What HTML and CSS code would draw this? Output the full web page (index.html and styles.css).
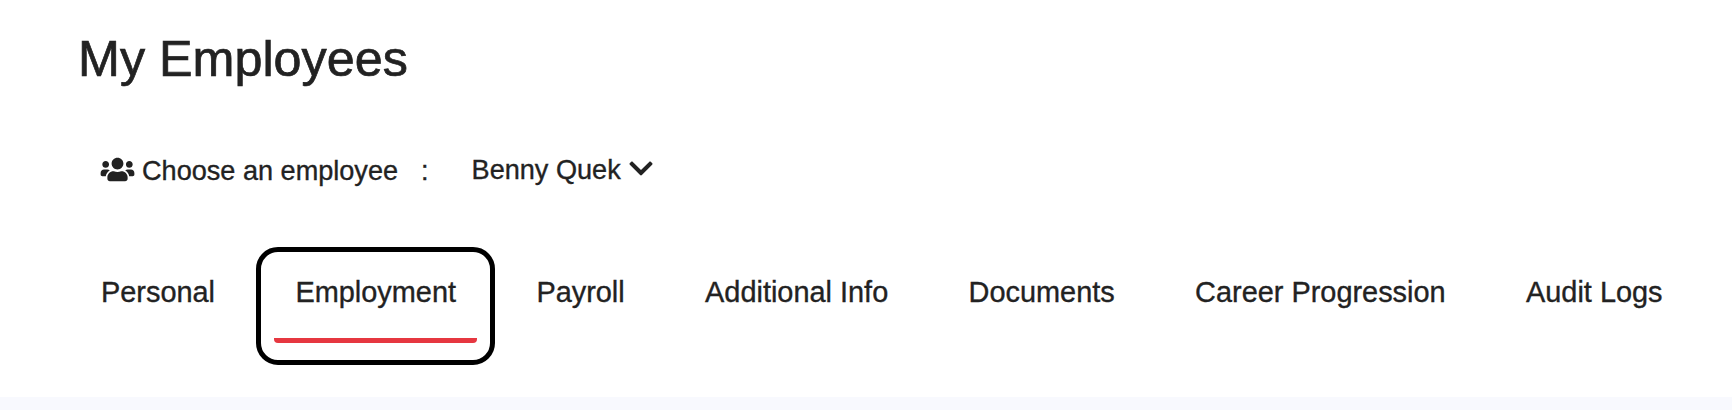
FILE: index.html
```html
<!DOCTYPE html>
<html lang="en">
<head>
    <meta charset="UTF-8">
    <meta name="viewport" content="width=device-width, initial-scale=1.0">
    <title>My Employees</title>
    <link rel="stylesheet" href="styles.css">
</head>
<body>

<div class="header">
    <h1>My Employees</h1>

    <!-- Employee picker -->
    <div class="picker">
        <svg class="icon-users" viewBox="0 0 640 512"><path d="M96 224c35.3 0 64-28.7 64-64s-28.7-64-64-64-64 28.7-64 64 28.7 64 64 64zm448 0c35.3 0 64-28.7 64-64s-28.7-64-64-64-64 28.7-64 64 28.7 64 64 64zm32 32h-64c-17.6 0-33.5 7.1-45.1 18.6 40.3 22.1 68.9 62 75.1 109.4h66c17.7 0 32-14.3 32-32v-32c0-35.3-28.7-64-64-64zm-256 0c61.9 0 112-50.1 112-112S381.9 32 320 32 208 82.1 208 144s50.1 112 112 112zm76.8 32h-8.3c-20.8 10-43.9 16-68.5 16s-47.6-6-68.5-16h-8.3C179.6 288 128 339.6 128 403.2V432c0 26.5 21.5 48 48 48h288c26.5 0 48-21.5 48-48v-28.8c0-63.6-51.6-115.2-115.2-115.2zm-223.7-13.4C161.5 263.1 145.6 256 128 256H64c-35.3 0-64 28.7-64 64v32c0 17.7 14.3 32 32 32h65.9c6.3-47.4 34.9-87.3 75.2-109.4z"/></svg>
        <span class="picker-label">Choose an employee</span>
        <span class="picker-colon">:</span>
        <a class="picker-value">Benny Quek
            <svg class="icon-down" viewBox="0 0 448 512"><path d="M207.029 381.476L12.686 187.132c-9.373-9.373-9.373-24.569 0-33.941l22.667-22.667c9.357-9.357 24.522-9.375 33.901-.04L224 284.505l154.745-154.021c9.379-9.335 24.544-9.317 33.901.04l22.667 22.667c9.373 9.373 9.373 24.569 0 33.941L240.971 381.476c-9.373 9.372-24.569 9.372-33.942 0z"/></svg>
        </a>
    </div>

    <!-- Tabs -->
    <ul class="tabs">
        <li><a>Personal</a></li>
        <li class="active"><a>Employment</a></li>
        <li><a>Payroll</a></li>
        <li><a>Additional Info</a></li>
        <li><a>Documents</a></li>
        <li><a>Career Progression</a></li>
        <li><a>Audit Logs</a></li>
    </ul>
</div>

</body>
</html>
```
FILE: styles.css
```css
body {
    font-family: "Liberation Sans", Arial, sans-serif;
    margin: 0;
    background-color: #f8f9fe;
    color: #222;
    overflow: hidden;
    -webkit-text-stroke: 0.35px #222; /* slightly heavier text */
}

.header {
    box-sizing: border-box;
    height: 397px;
    padding: 29px 0 0 62px;
    background-color: #fff;
}

h1 {
    margin: 0 0 0 16px;
    font-size: 50.3px;
    font-weight: normal;
    line-height: 60px;
    -webkit-text-stroke-width: 0.7px;
}

.picker {
    display: flex;
    margin: 64px 0 0 38px;
    height: 33px;
    font-size: 27.1px;
    line-height: 33px;
}

.picker svg {
    fill: #222;
    stroke: none;
}

.icon-users {
    width: 35px;
    height: 27px;
    margin-top: 3px;
}

.picker-label {
    margin: 1px 0 0 7px;
}

.picker-colon {
    margin: 1px 0 0 23px;
}

.picker-value {
    display: flex;
    gap: 8px;
    margin-left: 43px;
}

.icon-down {
    width: 24px;
    height: 27px;
    margin-top: 2px;
}

.tabs {
    display: flex;
    gap: 2.4px;
    margin: 61px 0 0;
    padding: 0;
    list-style-type: none;
}

.tabs li {
    box-sizing: border-box;
    height: 118px;
    padding: 0 13px;
    border: 5px solid transparent;
    border-radius: 22px;
}

.tabs a {
    display: block;
    box-sizing: border-box;
    height: 91px;
    padding: 24px 21px 0;
    border-bottom: 5px solid transparent;
    font-size: 28.9px;
    line-height: 33px;
    white-space: nowrap;
}

.tabs .active {
    border-color: #000;
}

/* red bar under the selected tab */
.tabs .active a {
    border-radius: 0 0 4px 4px;
    border-bottom-color: #e63740;
}
```
